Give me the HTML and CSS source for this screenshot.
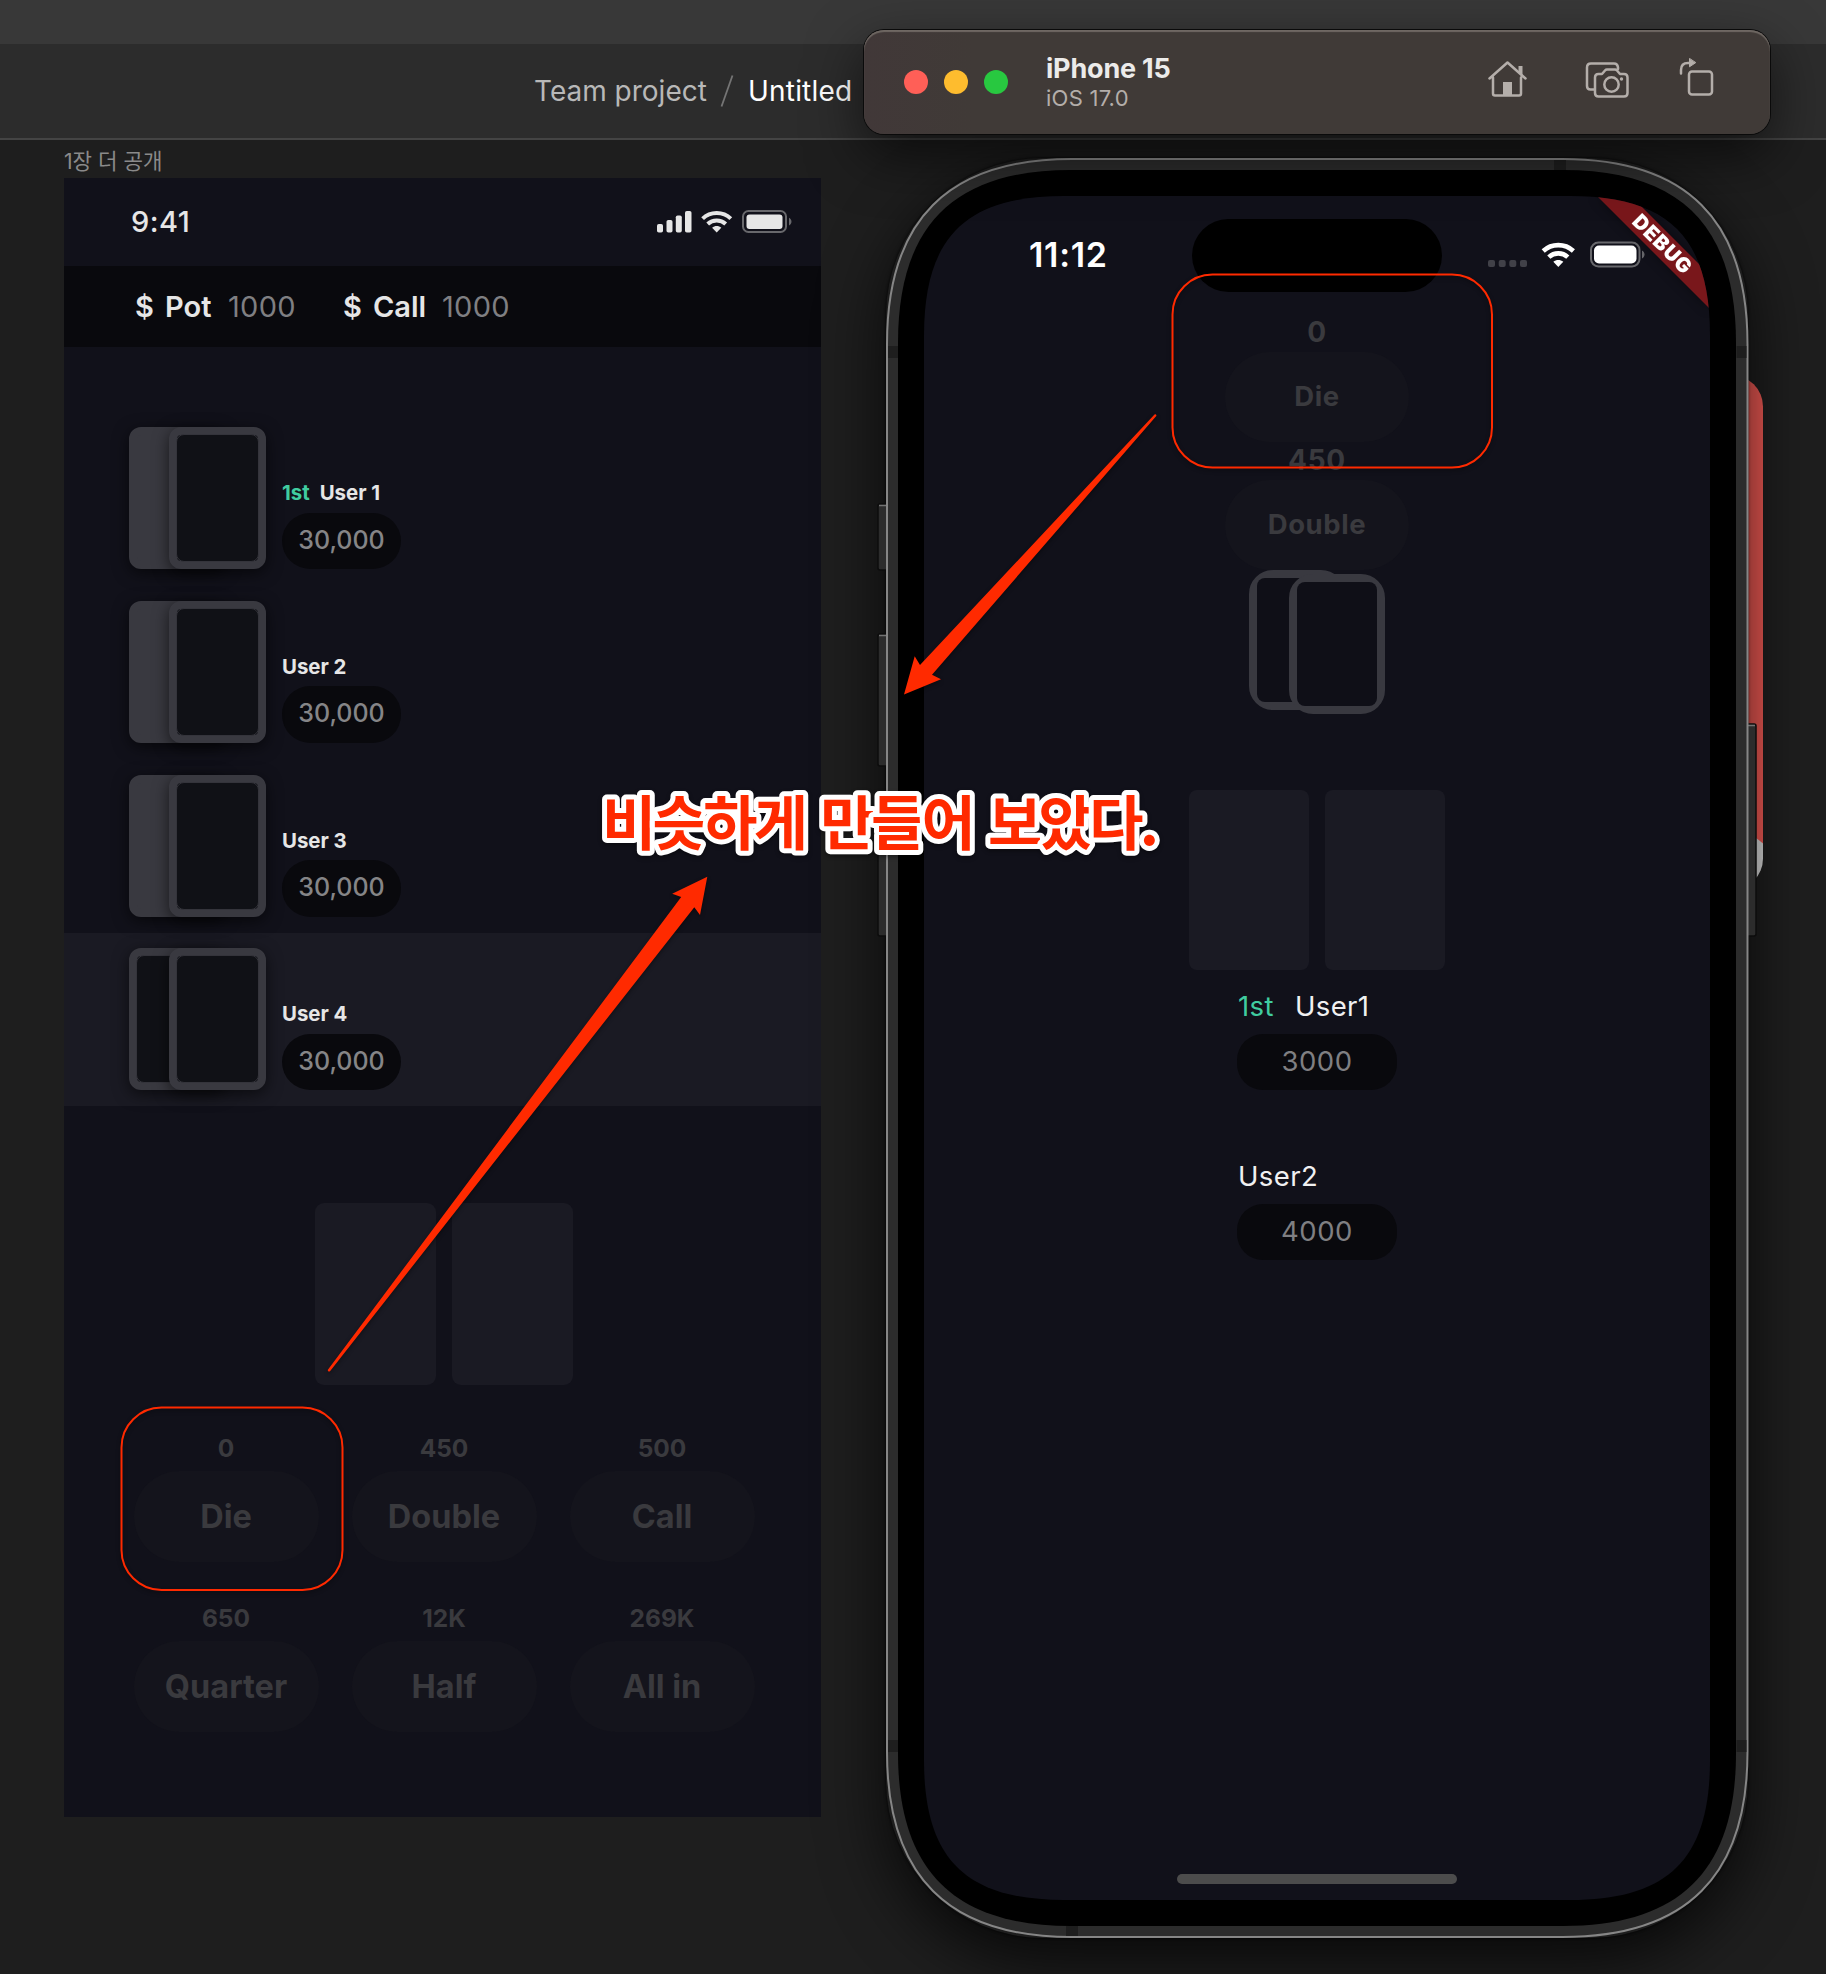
FILE: index.html
```html
<!DOCTYPE html>
<html lang="ko">
<head>
<meta charset="utf-8">
<title>Untitled</title>
<link rel="stylesheet" href="styles.css">
</head>
<body>
<div class="tabstrip"></div>
<header class="toolbar">
  <span class="project">Team project</span>
  <svg class="slash" width="14" height="34" viewBox="0 0 14 34"><path d="M12.5 1.500L1.500 32.500" stroke="#757575" stroke-width="1.800"/></svg>
  <span class="file">Untitled</span>
</header>

<main class="canvas">
  <div class="frame-label">1장 더 공개</div>
  <section class="frame">
    <div class="statusbar">
      <span class="clock">9:41</span>
      <svg class="signals" width="136" height="26" viewBox="0 0 136 26">
        <g fill="#e6e6e6">
          <rect x="0" y="14" width="6" height="8.500" rx="1.800"/><rect x="9.500" y="10" width="6" height="12.500" rx="1.800"/><rect x="18.800" y="5.500" width="6" height="17" rx="1.800"/><rect x="28" y="1" width="6.500" height="21.500" rx="1.800"/>
          <path d="M59.700 22.500l-4.600-4.700c2.700-2.300 6.500-2.300 9.200 0z"/>
        </g>
        <g fill="none" stroke="#e6e6e6" stroke-width="4"><path d="M45.600 8.600c7.800-7.400 20.400-7.400 28.200 0"/><path d="M50.700 14c5-4.700 13-4.700 18 0"/></g>
        <rect x="86" y="1" width="43" height="21" rx="5.500" fill="none" stroke="#68686c" stroke-width="2"/>
        <rect x="89.500" y="4.500" width="36" height="14.500" rx="3" fill="#e6e6e6"/>
        <path d="M132 7.800c3.300 1.600 3.300 6 0 7.600z" fill="#68686c"/>
      </svg>
    </div>
    <div class="potbar">
      <b class="coin">$</b><b class="pot">Pot</b><span>1000</span><b class="coin">$</b><b class="call">Call</b><span>1000</span>
    </div>
    <div class="users">
      <div class="user"><div class="pair"><i class="card full"></i><i class="card front"></i></div><div class="info"><div class="name"><em>1st</em>User 1</div><div class="chips">30,000</div></div></div>
      <div class="user"><div class="pair"><i class="card full"></i><i class="card front"></i></div><div class="info"><div class="name">User 2</div><div class="chips">30,000</div></div></div>
      <div class="user"><div class="pair"><i class="card full"></i><i class="card front"></i></div><div class="info"><div class="name">User 3</div><div class="chips">30,000</div></div></div>
      <div class="user me"><div class="pair"><i class="card"></i><i class="card front"></i></div><div class="info"><div class="name">User 4</div><div class="chips">30,000</div></div></div>
    </div>
    <div class="hand"><i></i><i></i></div>
    <div class="actions">
      <div><small>0</small><button>Die</button></div>
      <div><small>450</small><button>Double</button></div>
      <div><small>500</small><button>Call</button></div>
      <div><small>650</small><button>Quarter</button></div>
      <div><small>12K</small><button>Half</button></div>
      <div><small>269K</small><button>All in</button></div>
    </div>
  </section>
</main>

<div class="backdrop-widget"></div>

<section class="phone">
  <svg class="shell" width="884" height="1784" viewBox="-10 -2 884 1784">
    <g fill="#2c2c2c" stroke="#0c0c0c" stroke-width="1.500">
      <rect x="-8" y="346" width="12" height="66" rx="2"/><rect x="-8" y="476" width="12" height="132" rx="2"/><rect x="-8" y="646" width="12" height="132" rx="2"/>
      <rect x="858" y="566" width="12" height="212" rx="2"/>
    </g>
    <path d="M-7 347.500H0M-7 477.500H0M-7 647.500H0M862 567.500h7" stroke="#727272" stroke-width="1.500"/>
    <path transform="translate(1 1)" fill="#2c2c2c" stroke="#868686" stroke-width="2" d="M0 185C0 61 61 0 185 0H675.500C799.500 0 860.500 61 860.500 185V1593C860.500 1717 799.500 1778 675.500 1778H185C61 1778 0 1717 0 1593Z"/>
    <path fill="#1e1e1e" d="M2 188h10v12H2zM850.500 188h10v12h-10zM2 1582h10v12H2zM850.500 1582h10v12h-10zM668 2h12v10h-12zM180 1768h12v10h-12z"/>
    <path transform="translate(12 12)" fill="#000" d="M0 173C0 55.700 55.700 0 173 0H665C782.300 0 838 55.700 838 173V1583C838 1700.300 782.300 1756 665 1756H173C55.700 1756 0 1700.300 0 1583Z"/>
  </svg>
  <div class="screen">
    <div class="ios-status">
      <span class="ios-clock">11:12</span>
      <span class="island"></span>
      <svg class="ios-signals" width="158" height="30" viewBox="0 0 158 30">
        <g fill="#414148"><rect x="0" y="20" width="7" height="7" rx="2"/><rect x="10.700" y="20" width="7" height="7" rx="2"/><rect x="21.300" y="20" width="7" height="7" rx="2"/><rect x="32" y="20" width="7" height="7" rx="2"/></g>
        <path d="M70.300 27l-5-5.200c3-2.500 7-2.500 10 0z" fill="#fff"/>
        <g fill="none" stroke="#fff" stroke-width="4.600"><path d="M55.200 11c8.600-7.800 21.600-7.800 30.200 0"/><path d="M60.800 17.100c5.400-5 13.600-5 19 0"/></g>
        <rect x="103" y="2.500" width="48.500" height="24" rx="7.500" fill="none" stroke="#68686c" stroke-width="2"/>
        <rect x="106" y="5.500" width="42.500" height="18" rx="5" fill="#fff"/>
        <path d="M154 10.500c3.400 2 3.400 6 0 8z" fill="#68686c"/>
      </svg>
    </div>
    <div class="stack">
      <small>0</small><button>Die</button>
      <small>450</small><button>Double</button>
      <div class="outline-pair"><i></i><i></i></div>
      <div class="hand ios-hand"><i></i><i></i></div>
      <div class="player"><div class="pname"><em>1st</em>User1</div><div class="money">3000</div></div>
      <div class="player second"><div class="pname">User2</div><div class="money">4000</div></div>
    </div>
    <div class="indicator"></div>
    <svg class="banner" width="180" height="180" viewBox="0 0 180 180">
      <path d="M67 0h34l79 79v34z" fill="#79171b"/>
      <text x="133" y="48" transform="rotate(45 132.500 47.500)" dy="7" text-anchor="middle">DEBUG</text>
    </svg>
  </div>
</section>

<section class="simbar">
  <div class="lights"><i></i><i></i><i></i></div>
  <div class="device"><b>iPhone 15</b><span>iOS 17.0</span></div>
  <svg class="sim-icons" width="232" height="46" viewBox="0 0 232 46" fill="none" stroke="#b4aeaa" stroke-width="2.500" stroke-linecap="round" stroke-linejoin="round">
    <path d="M5 19.500V35.500q0 2 2 2H31q2 0 2-2V19.500M1.500 20.500L19.500 4.500L37.500 20.500"/>
    <path d="M30.500 8h4v9.500l-4-3.500z" fill="#b4aeaa" stroke="none"/><path d="M15 24h9v14h-9z" fill="#b4aeaa" stroke="none"/>
    <path d="M106 31.500h-3.500q-3.500 0-3.500-3.500V9.500q0-4 4-4H126q3.500 0 4 4V11"/>
    <path d="M110.500 16h3.500l3-3.500q.8-.9 2-.9h8q1.200 0 2 .9l3 3.500h4q3.500 0 3.500 3.500V35q0 3.500-3.500 3.500h-25.500q-3.500 0-3.500-3.500V19.500q0-3.500 3.500-3.500z"/>
    <circle cx="123.500" cy="26.500" r="7.200"/><circle cx="133.500" cy="21" r="1.700" fill="#b4aeaa" stroke="none"/>
    <rect x="201" y="13.500" width="23" height="23" rx="3"/>
    <path d="M193 15.500V12q0-7 7-7h2.500"/><path d="M201.500 .8v8l6-4z" fill="#b4aeaa" stroke-width="1"/>
  </svg>
</section>

<svg class="annotations" width="1826" height="1974" viewBox="0 0 1826 1974">
  <g fill="none" stroke="#ff2a00" stroke-width="2">
    <rect x="121.500" y="1407.500" width="221" height="182.500" rx="40"/>
    <rect x="1172.500" y="274.500" width="319.500" height="193" rx="40"/>
  </g>
  <g fill="#ff2a00">
    <path d="M1154.500 414.500q1.500-.8 2 1.200L932 674.700L941 679.300L904 694.500L914.700 656.300L920 665Z"/>
    <path d="M327.700 1370Q328 1372.300 330 1371.300L694.300 907.300L700 915L707.300 876.700L672.200 893.700L681.200 897Z"/>
  </g>
  <text class="caption" x="602" y="844.500" textLength="557">비슷하게 만들어 보았다.</text>
</svg>
</body>
</html>
```
FILE: styles.css
```css
* { box-sizing: border-box; }
body {
  margin: 0;
  width: 1826px;
  height: 1974px;
  position: relative;
  overflow: hidden;
  background: #1e1e1e;
  font-family: Inter, "Noto Sans CJK KR", sans-serif;
}
i, em { font-style: normal; }
small, button, .name, .chips { display: block; }
button {
  border: 0;
  padding: 0;
  font-family: inherit;
  color: #3a3a3e;
  background: #14141c;
}

.tabstrip { height: 44px; background: #383838; }
.toolbar {
  height: 96px;
  background: #2c2c2c;
  border-bottom: 2px solid #444;
  display: flex;
  align-items: center;
  padding-left: 534px;
  font-size: 28px;
}
.project { color: #b8b8b8; width: 171px; white-space: nowrap; }
.slash { margin: 0 14px 0 15px; }
.file { color: #fff; letter-spacing: .2px; }

.canvas { padding-left: 64px; }
.frame-label {
  height: 37.500px;
  line-height: 42px;
  font-size: 21.200px;
  color: #8a8a8a;
}
.frame {
  width: 757px;
  height: 1639px;
  background: #11111a;
  display: flex;
  flex-direction: column;
}
.statusbar {
  height: 88px;
  padding: 0 28px 0 67px;
  display: flex;
  align-items: center;
  justify-content: space-between;
  color: #e6e6e6;
}
.clock { font-size: 29px; font-weight: 500; letter-spacing: .5px; margin-top: -1px; }
.signals { margin-top: 2px; }
.potbar {
  height: 81px;
  background: #09090d;
  display: flex;
  align-items: center;
  padding: 0 0 0 71px;
  font-size: 29px;
  flex: none;
}
.potbar b { font-weight: 600; color: #e6e6e6; }
.potbar .coin { width: 30px; }
.potbar .pot { width: 63px; }
.potbar .call { width: 69px; }
.potbar span { color: #7f7f82; width: 115px; letter-spacing: .3px; }

.users { margin-top: 65px; }
.user {
  height: 173.700px;
  padding: 15.700px 0 16px 65px;
  display: flex;
  gap: 16px;
}
.me { background: #1a1a23; }
.pair { position: relative; width: 137px; }
.card {
  position: absolute;
  left: 0;
  top: 0;
  width: 97px;
  height: 142px;
  border: 8px solid #393940;
  border-radius: 12px;
  background: #101116;
  box-shadow: 0 4px 16px rgba(0, 0, 0, .6);
}
.card::after {
  content: "";
  position: absolute;
  inset: -1px;
  border-radius: 8px;
  background: #101116;
  border: 1px solid #34343b;
}
.full { background: #393940; }
.full::after { display: none; }
.front { left: 40px; }
.info { display: flex; flex-direction: column; justify-content: flex-end; align-items: flex-start; }
.name {
  line-height: 24px;
  margin-bottom: 7.500px;
  font-size: 20.400px;
  font-weight: 700;
  color: #e6e6e6;
}
.name em { color: #40cca0; margin-right: 10px; }
.chips {
  width: 119px;
  height: 56.500px;
  border-radius: 28px;
  background: #09090d;
  color: #858587;
  text-align: center;
  font-size: 25px;
  line-height: 55.500px;
  font-weight: 500;
}
.hand { display: flex; gap: 16px; justify-content: center; }
.hand i { width: 121px; height: 182px; border-radius: 9px; background: #1a1a23; }
.frame .hand { margin: 96.500px 0 0 2px; }
.actions {
  margin: 49px 0 0 69.500px;
  display: grid;
  grid-template-columns: repeat(3, 185px);
  column-gap: 33px;
  row-gap: 42px;
  text-align: center;
}
small { color: #3a3a3e; font-weight: 700; }
.actions small { font-size: 24.500px; line-height: 29px; margin-bottom: 8px; }
.actions button {
  width: 185px;
  height: 91px;
  border-radius: 46px;
  font-size: 32.500px;
  font-weight: 700;
}

.backdrop-widget {
  position: absolute;
  left: 1700px;
  top: 375px;
  width: 62.500px;
  height: 515px;
  border-radius: 42px;
  background: linear-gradient(38deg, #d8d8d8 75px, #f05a54 76px);
}
.phone {
  position: absolute;
  left: 886px;
  top: 158px;
  width: 862px;
  height: 1780px;
  border-radius: 157px;
  box-shadow: 0 0 3px #000, 0 22px 65px rgba(0, 0, 0, .75);
}
.shell { position: absolute; left: -10px; top: -2px; }
.screen {
  position: absolute;
  left: 38px;
  top: 38px;
  width: 786px;
  height: 1704px;
  background: #11111a;
  clip-path: path("M0 140C0 41.3 41.3 0 140 0H646C744.7 0 786 41.3 786 140V1564C786 1662.7 744.7 1704 646 1704H140C41.3 1704 0 1662.7 0 1564Z");
}
.ios-status {
  height: 118px;
  padding: 22.500px 64px 0 105px;
  display: flex;
  align-items: flex-start;
}
.ios-clock {
  width: 163px;
  line-height: 72px;
  font-size: 34px;
  font-weight: 600;
  letter-spacing: .7px;
  color: #fff;
}
.island { width: 250px; height: 73px; border-radius: 37px; background: #000; }
.ios-signals { margin: 21px 0 0 46px; flex: none; }
.stack { display: flex; flex-direction: column; align-items: center; }
.stack small { font-size: 28px; line-height: 37px; height: 38px; letter-spacing: .8px; font-weight: 650; }
.stack button {
  width: 184px;
  height: 90px;
  border-radius: 46px;
  padding-bottom: 2px;
  font-size: 27.500px;
  font-weight: 650;
  letter-spacing: .6px;
}
.outline-pair { position: relative; width: 136px; height: 220px; }
.outline-pair i {
  position: absolute;
  left: 0;
  top: 0;
  width: 96px;
  height: 140px;
  border: 8px solid #393940;
  border-radius: 24px;
  background: #393940;
}
.outline-pair i::after {
  content: "";
  position: absolute;
  inset: 0;
  border-radius: 8px;
  background: #0f0f17;
}
.outline-pair i + i { left: 40px; top: 4px; }
.ios-hand i { width: 120px; height: 180px; border-radius: 8px; }
.player { width: 160px; margin-top: 16px; }
.second { margin-top: 66px; }
.pname { line-height: 41px; height: 40px; padding-left: 1px; margin-bottom: 8px; font-size: 27.500px; color: #f0f0f1; letter-spacing: .4px; white-space: nowrap; }
.pname em { color: #40cca0; margin-right: 21px; }
.money {
  height: 56px;
  line-height: 55px;
  border-radius: 26px;
  background: #09090d;
  color: #7f7f82;
  text-align: center;
  font-size: 27.500px;
  letter-spacing: .5px;
}
.indicator {
  position: absolute;
  left: 253px;
  bottom: 16px;
  width: 280px;
  height: 10px;
  border-radius: 5px;
  background: #4c4c4c;
}
.banner { position: absolute; right: 0; top: 0; filter: drop-shadow(0 0 6px rgba(0, 0, 0, .4)); }
.banner text { font-size: 20.400px; font-weight: 900; fill: #fff; letter-spacing: .8px; }

.simbar {
  position: absolute;
  left: 864px;
  top: 30px;
  width: 906px;
  height: 104px;
  border-radius: 20px;
  background: linear-gradient(90deg, #413838, #403a37 12%);
  box-shadow: 0 0 0 1px #0a0a0a, inset 0 2px 1px #6f6863, 0 20px 55px rgba(0, 0, 0, .6);
  display: flex;
  align-items: center;
  padding-left: 40px;
}
.lights { display: flex; gap: 16px; }
.lights i { width: 24px; height: 24px; border-radius: 50%; background: #ff5f57; }
.lights i:nth-child(2) { background: #febc2e; }
.lights i:nth-child(3) { background: #28c840; }
.device { width: 441px; padding: 3px 0 0 38px; display: flex; flex-direction: column; }
.device b { font-size: 27px; line-height: 30px; font-weight: 700; color: #ecebea; letter-spacing: -.2px; }
.device span { font-size: 22px; line-height: 29px; color: #b4aeaa; letter-spacing: .25px; }
.sim-icons { margin: -3px 0 0 39px; flex: none; }

.annotations { position: absolute; left: 0; top: 0; filter: drop-shadow(0 2px 2px rgba(0, 0, 0, .4)); }
.caption {
  font-family: "Noto Sans CJK KR", sans-serif;
  font-size: 59px;
  font-weight: 700;
  word-spacing: 3px;
  fill: #ff2a00;
  stroke: #fff;
  stroke-width: 10px;
  stroke-linejoin: round;
  paint-order: stroke;
}
```
